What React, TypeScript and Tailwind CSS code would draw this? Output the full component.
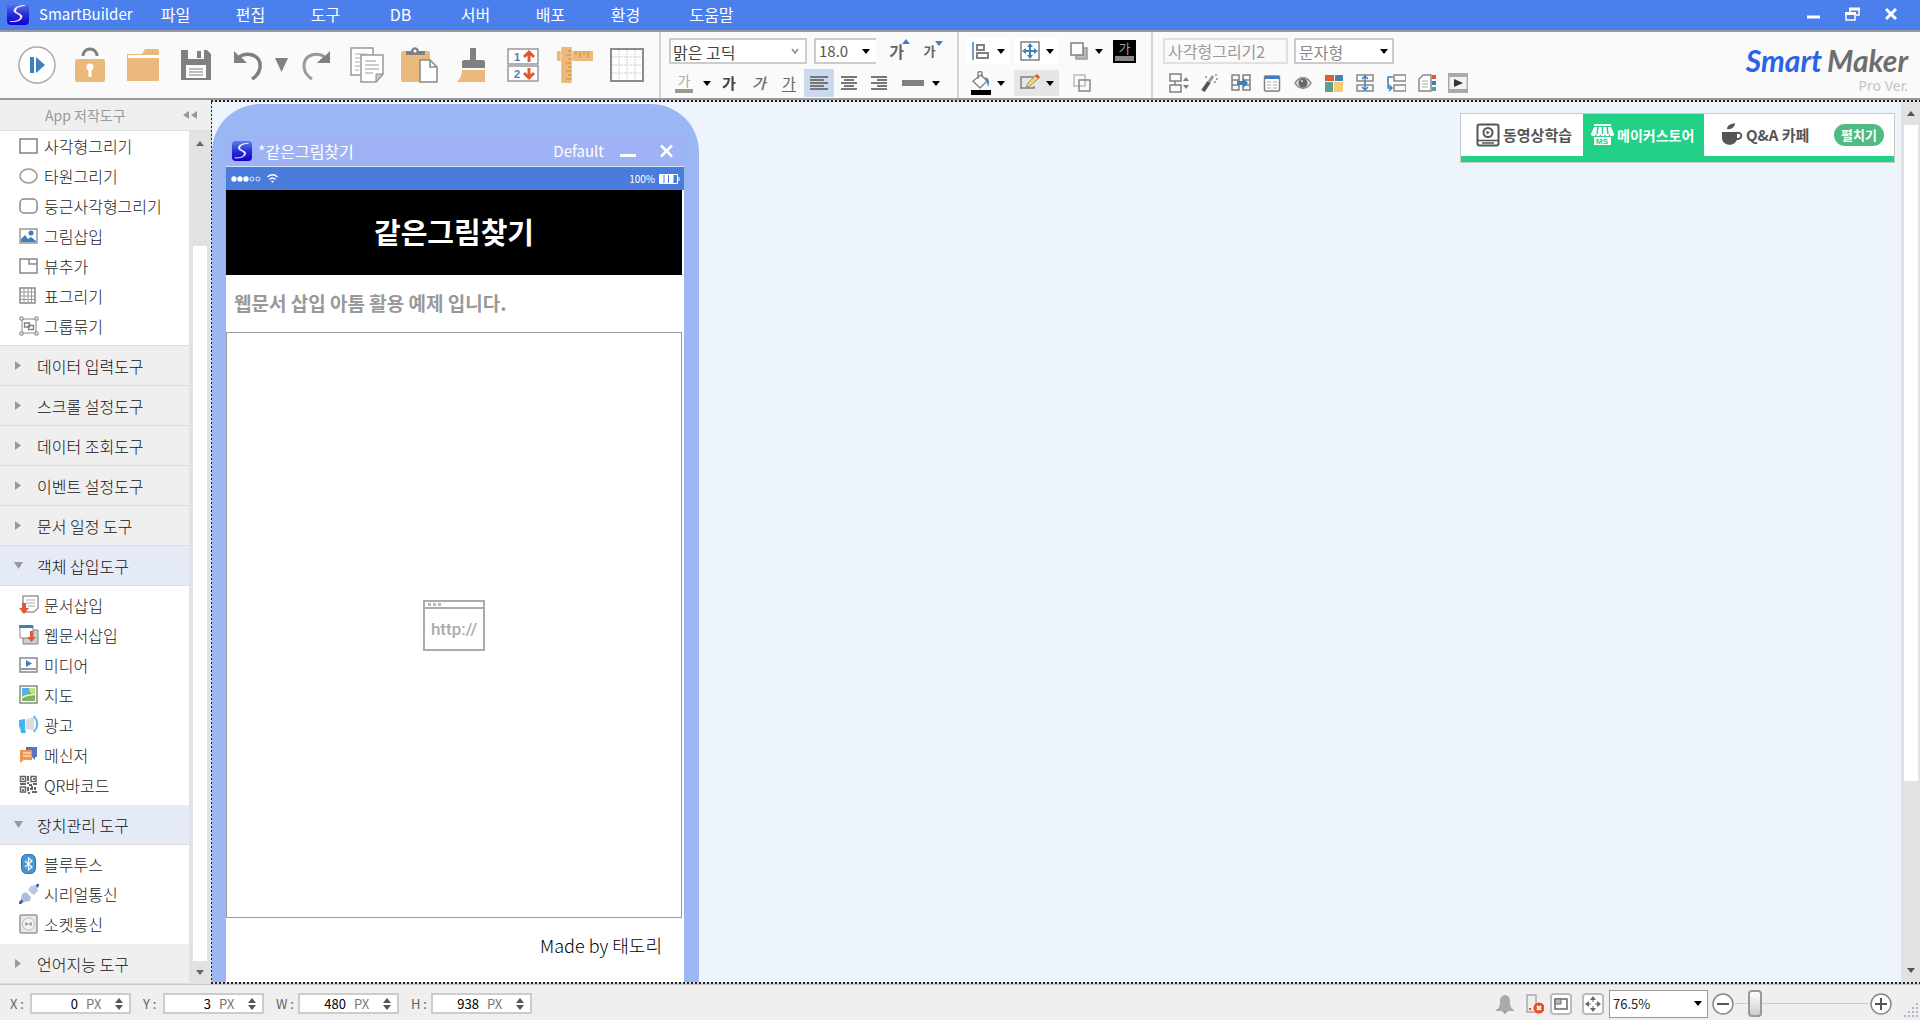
import React from 'react';

type Item = { label: string; icon: React.ReactNode };

const G = '#808080';
const ORANGE = '#ecb97c';
const BLUE = '#3f7fbf';
const RED = '#dc5a35';

function Svg({ w, h, children }: { w: number; h: number; children: React.ReactNode }) {
  return (
    <svg width={w} height={h} viewBox={`0 0 ${w} ${h}`} fill="none" className="shrink-0" aria-hidden="true">
      {children}
    </svg>
  );
}

function Down({ color = '#000' }: { color?: string }) {
  return <Svg w={8} h={5}><path d="M0 0h8L4 5z" fill={color} /></Svg>;
}

function Up({ color = '#000' }: { color?: string }) {
  return <Svg w={8} h={5}><path d="M0 5h8L4 0z" fill={color} /></Svg>;
}

function AppLogo({ size }: { size: number }) {
  return (
    <svg width={size} height={size} viewBox="0 0 22 22" fill="none" className="shrink-0" aria-hidden="true">
      <defs>
        <linearGradient id="logo" x1="0" y1="0" x2="0" y2="1">
          <stop offset="0" stopColor="#5a80f0" />
          <stop offset="0.5" stopColor="#2a2fd8" />
          <stop offset="1" stopColor="#1200d0" />
        </linearGradient>
      </defs>
      <rect width="22" height="22" rx="4" fill="url(#logo)" />
      <path d="M18 2.500C12 2.500 6.500 4.500 7 8c.4 2.800 7 3 6.500 6.200-.4 3-5.500 4.800-10.500 4.300 6 .6 12-1 12-5 0-3-6.500-3-6.300-6C9 4.800 12.500 3 18 2.500z" fill="#fff" stroke="#fff" strokeWidth=".6" />
    </svg>
  );
}

const tools = [
  {
    name: '실행', icon: (
      <Svg w={38} h={38}>
        <circle cx="19" cy="19" r="18" fill="#fff" stroke="#aaa" strokeWidth="1.500" />
        <path d="M12 11h4v16h-4z" fill={BLUE} /><path d="M18 11l9 8-9 8z" fill={BLUE} />
      </Svg>),
  },
  {
    name: '잠금', icon: (
      <Svg w={32} h={36}>
        <path d="M9 9c0-4 3-7 7-7s7 3 7 7" stroke={G} strokeWidth="3" />
        <rect x="1" y="12" width="30" height="23" rx="2" fill={ORANGE} />
        <circle cx="16" cy="20" r="3.500" fill="#fff" /><path d="M14.500 22h3v8h-3z" fill="#fff" />
      </Svg>),
  },
  {
    name: '열기', icon: (
      <Svg w={34} h={34}>
        <path d="M1 6h15l3-5h13l1 2v30H1z" fill={ORANGE} /><path d="M2 7h31v3H2z" fill="#fff" />
      </Svg>),
  },
  {
    name: '저장', icon: (
      <Svg w={32} h={32}>
        <path d="M1 1h26l4 4v26H1z" fill={G} /><path d="M8 1h16v9H8z" fill="#fafafa" /><path d="M17 2h4v7h-4z" fill={G} />
        <path d="M6 16h20v13H6z" fill="#fafafa" /><path d="M9 20h14M9 23h14M9 26h14" stroke={G} />
      </Svg>),
  },
  {
    name: '실행 취소', icon: (
      <Svg w={32} h={32}>
        <path d="M5 9c8-7 23-4 22 9-.4 5-3 9-8 12" stroke={G} strokeWidth="3.500" /><path d="M1 2v12h13l-4-4-5-4z" fill={G} />
      </Svg>),
  },
];

const tools2 = [
  {
    name: '복사', icon: (
      <Svg w={34} h={36}>
        <path d="M1 1h22v27H1z" fill="#fff" stroke="#999" strokeWidth="1.500" /><path d="M5 7h12M5 11h8M5 15h5M5 19h5M5 23h4" stroke="#aaa" />
        <path d="M11 8h22v19l-7 8H11z" fill="#fff" stroke="#999" strokeWidth="1.500" />
        <path d="M26 35v-8h7z" fill="#ccc" stroke="#888" /><path d="M15 14h11M15 18h14M15 22h14M15 26h8" stroke="#999" />
      </Svg>),
  },
  {
    name: '붙여넣기', icon: (
      <Svg w={38} h={36}>
        <rect x="1" y="4" width="29" height="31" rx="2" fill={ORANGE} />
        <path d="M6 8V4h5c1-5 7-5 8 0h6v4z" fill={G} /><circle cx="15" cy="4" r="1.500" fill="#fff" />
        <path d="M20 13h10l7 7v15H20z" fill="#fff" stroke="#888" strokeWidth="1.500" /><path d="M30 13v7h7" stroke="#888" strokeWidth="1.500" />
      </Svg>),
  },
  {
    name: '서식 복사', icon: (
      <Svg w={30} h={36}>
        <path d="M14 1h6v12h-6z" fill={G} /><path d="M8 13h19a2 2 0 012 2v6H6v-6a2 2 0 012-2z" fill={G} />
        <path d="M6 23h23v12H1c3-3 5-7 5-12z" fill={ORANGE} />
      </Svg>),
  },
  {
    name: '순서', icon: (
      <Svg w={32} h={34}>
        <path d="M1 1h30v15H1zM1 18h30v15H1z" fill="#fff" stroke="#999" strokeWidth="1.500" />
        <text x="7" y="13" fontSize="11" fontWeight="bold" fill={BLUE} fontFamily="Liberation Sans">1</text>
        <text x="7" y="30" fontSize="11" fontWeight="bold" fill={BLUE} fontFamily="Liberation Sans">2</text>
        <path d="M22 14V5M17 9l5-5 5 5M22 20v9M17 25l5 5 5-5" stroke={RED} strokeWidth="3" />
      </Svg>),
  },
  {
    name: '눈금자', icon: (
      <Svg w={38} h={38}>
        <path d="M1 5h36v10H1z" fill={ORANGE} /><path d="M20 5v4M24 5v6M28 5v4M32 5v6" stroke="#c98d3f" />
        <path d="M5 1h11v36H5z" fill={ORANGE} /><path d="M12 5h4M10 9h6M12 13h4M10 17h6M12 21h4M10 25h6M12 29h4M10 33h6" stroke="#c98d3f" />
        <path d="M5 1v36M16 1v36" stroke="#fff" strokeOpacity=".5" />
      </Svg>),
  },
  {
    name: '격자', icon: (
      <Svg w={34} h={34}>
        <path d="M1 1h32v32H1z" fill="#fff" stroke="#8c8c8c" strokeWidth="2" />
        <path d="M9 2v30M17 2v30M25 2v30M2 9h30M2 17h30M2 25h30" stroke="#ccc" strokeDasharray="2 1" />
      </Svg>),
  },
];

const propTools = [
  {
    name: '간격', icon: (
      <Svg w={20} h={20}>
        <path d="M1 1h11v7H1zM1 12h11v7H1zM6 8v4" stroke={G} strokeWidth="1.500" /><path d="M14 8h6l-3-4zM14 12h6l-3 4z" fill={G} />
      </Svg>),
  },
  {
    name: '마법봉', icon: (
      <Svg w={18} h={20}>
        <path d="M2 18L8 9" stroke="#555" strokeWidth="4" /><path d="M8 9l4-6" stroke="#999" strokeWidth="3" />
        <path d="M4 3h2v2H4zM14 1h2v2h-2zM13 8h2v2h-2zM15 5h2v2h-2z" fill="#aaa" />
      </Svg>),
  },
  {
    name: '이동', icon: (
      <Svg w={20} h={20}>
        <path d="M1 2h7v15H1zM12 2h7v15h-7zM1 7h7M1 12h7M12 7h7M12 12h7" stroke={G} strokeWidth="1.500" />
        <path d="M6 8h6V5l5 5-5 5v-3H6z" fill={BLUE} />
      </Svg>),
  },
  {
    name: '표 보기', icon: (
      <Svg w={18} h={20}>
        <rect x="1.500" y="3" width="15" height="15" rx="1" fill="#fff" stroke={G} strokeWidth="1.500" /><path d="M2 3h14v3H2z" fill={BLUE} />
        <path d="M4 9h4M4 12h4M4 15h4M10 9h4M10 12h4M10 15h4" stroke="#aaa" />
      </Svg>),
  },
  {
    name: '미리보기', icon: (
      <Svg w={18} h={20}>
        <path d="M1 10c4-7 12-7 16 0-4 7-12 7-16 0z" fill="#ddd" stroke="#888" strokeWidth="1.500" /><circle cx="9" cy="10" r="4.500" fill="#666" />
        <circle cx="8" cy="8" r="1" fill="#ddd" />
      </Svg>),
  },
  {
    name: '색상', icon: (
      <Svg w={18} h={20}>
        <path d="M0 2h9v6H0z" fill={RED} /><path d="M10 2h8v6h-8z" fill="#4a80b8" /><path d="M0 9h8v10H0z" fill="#5f9f8c" /><path d="M9 9h9v10H9z" fill="#f8ca74" />
      </Svg>),
  },
  {
    name: '높이', icon: (
      <Svg w={18} h={20}>
        <path d="M1 2h16v6H1zM1 12h16v6H1z" stroke="#888" strokeWidth="1.500" /><path d="M9 3v14M6 6l3-3 3 3M6 14l3 3 3-3" stroke={BLUE} strokeWidth="1.500" />
      </Svg>),
  },
  {
    name: '연결', icon: (
      <Svg w={20} h={20}>
        <path d="M8 2h12v6H8zM8 12h12v6H8z" stroke="#888" strokeWidth="1.500" /><path d="M7 4H2v11h3M3 12l3 3-3 3" stroke={BLUE} strokeWidth="1.500" />
      </Svg>),
  },
  {
    name: '문서 색인', icon: (
      <Svg w={18} h={20}>
        <path d="M5 2h8v16H1V6z" fill="#fff" stroke="#888" strokeWidth="1.500" /><path d="M4 8h6M4 11h6M4 14h6" stroke="#aaa" />
        <path d="M14 2h4v4h-4z" fill={RED} /><path d="M14 8h4v4h-4z" fill={BLUE} /><path d="M14 14h4v4h-4z" fill="#5f9f8c" />
      </Svg>),
  },
  {
    name: '재생', icon: (
      <Svg w={20} h={20}>
        <path d="M0 0h20v20H0z" fill="#aaa" /><path d="M1.500 4h17v12h-17z" fill="#f2f2f2" /><path d="M6 6l9 4-9 4z" fill="#333" />
      </Svg>),
  },
];

const drawItems: Item[] = [
  { label: '사각형그리기', icon: <Svg w={20} h={20}><path d="M1 3h17v14H1z" stroke={G} strokeWidth="1.500" /></Svg> },
  { label: '타원그리기', icon: <Svg w={20} h={20}><ellipse cx="9.500" cy="10" rx="8.500" ry="7" stroke="#999" strokeWidth="1.500" /></Svg> },
  { label: '둥근사각형그리기', icon: <Svg w={20} h={20}><rect x="1" y="3" width="17" height="14" rx="4" stroke="#888" strokeWidth="1.500" /></Svg> },
  {
    label: '그림삽입', icon: (
      <Svg w={20} h={20}><path d="M1 3h17v14H1z" fill="#fff" stroke="#999" strokeWidth="1.500" /><path d="M2 16v-3l4-4 3 4 3-2 5 4v1z" fill={BLUE} /><circle cx="12" cy="7" r="2.500" fill={BLUE} /></Svg>),
  },
  { label: '뷰추가', icon: <Svg w={20} h={20}><path d="M1 3h17v14H1zM10 3v5h8" stroke="#888" strokeWidth="1.500" /></Svg> },
  { label: '표그리기', icon: <Svg w={20} h={20}><path d="M1 2h15v15H1z" stroke="#888" strokeWidth="1.500" /><path d="M5 2v15M9 2v15M12.500 2v15M1 6h15M1 10h15M1 13.500h15" stroke="#999" /></Svg> },
  {
    label: '그룹묶기', icon: (
      <Svg w={20} h={20}>
        <path d="M3 3h14v14H3z" stroke="#888" /><path d="M1 1h3v3H1zM16 1h3v3h-3zM1 16h3v3H1zM16 16h3v3h-3z" fill="#fff" stroke={G} />
        <path d="M5.500 7h5v4h-5zM9.500 9.500h5v4h-5z" fill="#fff" stroke={G} strokeWidth="1.300" />
      </Svg>),
  },
];

const objectItems: Item[] = [
  {
    label: '문서삽입', icon: (
      <Svg w={20} h={20}><path d="M4 1h15v12l-4 4H4z" fill="#fff" stroke="#999" strokeWidth="1.500" /><path d="M7 5h9M7 8h9M9 11h7" stroke="#aaa" /><path d="M3 8h4v5h3l-5 6-5-6h3z" fill={RED} /></Svg>),
  },
  {
    label: '웹문서삽입', icon: (
      <Svg w={20} h={20}><path d="M4 5h15v14H4z" fill="#ccc" stroke={G} /><path d="M1 1h13v12H1z" fill="#fff" stroke="#888" /><path d="M0 0h14v3H0z" fill={BLUE} /><path d="M11 6h3v6h3l-4.500 5L8 12h3z" fill={RED} /></Svg>),
  },
  { label: '미디어', icon: <Svg w={20} h={20}><path d="M1 3h17v14H1z" fill="#fff" stroke="#888" strokeWidth="1.500" /><path d="M2 14h15" stroke="#999" strokeWidth="2" /><path d="M7 5l6 3.500L7 12z" fill={BLUE} /></Svg> },
  {
    label: '지도', icon: (
      <Svg w={20} h={20}><path d="M1 1h17v17H1z" fill="#fff" stroke="#888" strokeWidth="1.500" /><path d="M3 3h13v13H3z" fill="#7bb661" /><path d="M3 3h8l-2 5-6 3z" fill="#58aef0" /><path d="M10 3h6v5c-3 2-6 0-6-5z" fill="#c4e07a" /><path d="M3 13c4-4 8-2 13-4" stroke="#e8f3cf" strokeWidth="1.500" /></Svg>),
  },
  { label: '광고', icon: <Svg w={20} h={20}><path d="M0 5l6-1v10l1 4H2l-1-5-1-2z" fill="#45b4ea" /><path d="M7 4c3 0 6-1 8-3v16c-2-2-5-3-8-3z" fill="#dcdcdc" /><path d="M15 1c4 5 4 11 0 16" stroke="#5bb8ea" strokeWidth="2" /></Svg> },
  {
    label: '메신저', icon: (
      <Svg w={20} h={20}><path d="M7 2h11v10h-2v3l-3-3H7z" fill="#5b72bf" /><path d="M1 5h12v10H5l-4 3z" fill="#f0964a" /><path d="M4 8h8M4 11h8" stroke="#fff" /></Svg>),
  },
  {
    label: 'QR바코드', icon: (
      <Svg w={20} h={20}>
        <path d="M1.500 1.500h5v5h-5zM12 1.500h5v5h-5zM1.500 12h5v5h-5z" stroke="#666" strokeWidth="1.500" /><path d="M3 3h2v2H3zM14 3h2v2h-2zM3 14h2v2H3z" fill="#777" />
        <path d="M9 1v5M8 8h2M1 9h4M10 10h3M14 9h4M9 12v4M12 12h2M16 12v3M11 14h3M13 17h5M9 18h2M6 8v2" stroke="#666" strokeWidth="2" />
      </Svg>),
  },
];

const deviceItems: Item[] = [
  { label: '블루투스', icon: <Svg w={20} h={20}><rect x="2.500" y=".5" width="14" height="19" rx="5" fill="#4a96d2" stroke="#2f6ea3" /><path d="M6 7l7 6-3.500 3V4L13 7l-7 6" stroke="#fff" strokeWidth="1.200" /></Svg> },
  { label: '시리얼통신', icon: <Svg w={20} h={20}><path d="M0 20l4-4M16 4l4-4" stroke="#3d5fa8" strokeWidth="3" /><path d="M2 15l1-5 4-2 5 5-1 4-6 1z" fill="#a9bfd8" /><path d="M9 6l3-4 5-1 2 6-4 4-2-1z" fill="#b8cadf" /></Svg> },
  { label: '소켓통신', icon: <Svg w={20} h={20}><rect x="1" y="1" width="17" height="18" rx="1" fill="#e8e8e8" stroke="#999" strokeWidth="1.500" /><circle cx="9.500" cy="10" r="6" fill="#f4f4f4" stroke="#bbb" /><path d="M6 10h7M7 8v4M12 8v4" stroke="#888" /></Svg> },
];

function ToolList({ items, className }: { items: Item[]; className: string }) {
  return (
    <ul className={`bg-white ${className}`}>
      {items.map((item) => (
        <li key={item.label}>
          <button className="flex h-[30px] w-full items-center gap-[5px] pl-[19px] text-[16px] font-light text-[#222]">
            {item.icon}
            {item.label}
          </button>
        </li>
      ))}
    </ul>
  );
}

function Section({ title, open = false }: { title: string; open?: boolean }) {
  return (
    <button className={`flex h-10 w-full shrink-0 items-center border-b border-[#dcdcdc] pl-[14px] text-[16px] font-light text-[#111] ${open ? 'bg-[#e4eaf6]' : 'bg-[#efefef]'}`}>
      <span className="w-[23px]">
        {open ? <Svg w={9} h={7}><path d="M0 0h9L4.500 7z" fill="#999" /></Svg> : <Svg w={9} h={9}><path d="M1 0v9l6-4.500z" fill="#999" /></Svg>}
      </span>
      {title}
    </button>
  );
}

function Split({ icon, className = '', name }: { icon: React.ReactNode; className?: string; name: string }) {
  return (
    <button aria-label={name} className={`flex h-[26px] w-[45px] items-center ${className}`}>
      <span className="flex w-[32px] justify-center">{icon}</span>
      <Down />
    </button>
  );
}

function Field({ label, value }: { label: string; value: string }) {
  return (
    <div className="flex items-center gap-1">
      <label htmlFor={`pos-${label}`} className="min-w-4 text-[13px] whitespace-nowrap text-[#666]">{label} :</label>
      <div className="flex h-[21px] w-[101px] items-center border-2 border-[#ccc] bg-white pr-[6px] text-[13px]">
        <input id={`pos-${label}`} defaultValue={value} className="w-[46px] text-right text-black outline-none" />
        <span className="ml-2 text-[#777]">PX</span>
        <button aria-label={`${label} 값 조절`} className="ml-auto flex flex-col gap-[2px]">
          <Up color="#555" />
          <Down color="#555" />
        </button>
      </div>
    </div>
  );
}

function Bars({ d }: { d: string }) {
  return <Svg w={18} h={16}><path d={d} stroke="#777" strokeWidth="2" /></Svg>;
}

function Header() {
  return (
    <header className="flex h-[30px] shrink-0 items-center bg-[#4b7fec] pb-[2px] pl-[7px] text-[15px] text-white">
      <AppLogo size={22} />
      <h1 className="ml-[10px] w-[99px]">SmartBuilder</h1>
      <nav className="flex flex-1">
        {['파일', '편집', '도구', 'DB', '서버', '배포', '환경'].map((m) => (
          <button key={m} className="w-[75px] text-center text-[16px]">{m}</button>
        ))}
        <button className="ml-[11px] w-[75px] text-center text-[16px]">도움말</button>
      </nav>
      <div className="flex items-center gap-[25px] pr-[23px]">
        <button aria-label="최소화"><Svg w={13} h={14}><path d="M0 10h13" stroke="#fff" strokeWidth="3" /></Svg></button>
        <button aria-label="이전 크기로"><Svg w={15} h={14}><path d="M5 5V2h9v6h-3M1 6h9v7H1z" stroke="#fff" strokeWidth="1.500" /><path d="M4 2h11M0 6.500h11" stroke="#fff" strokeWidth="3" /></Svg></button>
        <button aria-label="닫기"><Svg w={12} h={14}><path d="M1 2l10 10M11 2L1 12" stroke="#fff" strokeWidth="3" /></Svg></button>
      </div>
    </header>
  );
}

function Toolbar() {
  return (
    <div className="flex h-[70px] shrink-0 border-t-2 border-b-2 border-t-[#999] border-b-[#999] bg-[#fafafa]">
      <div className="flex items-center border-r-2 border-[#d4d4d4] pr-[6px] pl-[10px]">
        {tools.map((t) => <button key={t.name} aria-label={t.name} className="flex w-[53px] justify-center">{t.icon}</button>)}
        <button aria-label="취소 목록"><Svg w={13} h={14}><path d="M0 0h13L6.500 14z" fill={G} /></Svg></button>
        <button aria-label="다시 실행" className="flex w-[53px] justify-center">
          <Svg w={32} h={32}><path d="M27 9C19 2 4 5 5 18c.4 5 3 9 8 12" stroke="#999" strokeWidth="3" /><path d="M31 2v12H18l4-4 5-4z" fill={G} /></Svg>
        </button>
        {tools2.map((t) => <button key={t.name} aria-label={t.name} className="flex w-[52px] justify-center">{t.icon}</button>)}
      </div>

      <div className="flex w-[298px] flex-col gap-[5px] border-r-2 border-[#d4d4d4] pt-[6px] pl-2">
        <div className="flex h-[26px] items-center">
          <div className="relative flex items-center">
            <select aria-label="글꼴" className="h-[26px] w-[138px] appearance-none border-2 border-[#ccc] bg-white pl-[2px] text-[16px] text-[#444]"><option>맑은 고딕</option></select>
            <span className="pointer-events-none absolute right-2"><Svg w={8} h={6}><path d="M1 1l3 4 3-4" stroke="#888" strokeWidth="1.500" /></Svg></span>
          </div>
          <div className="relative ml-[7px] flex items-center">
            <select aria-label="글꼴 크기" className="h-[26px] w-[62px] appearance-none border-2 border-r-0 border-[#ccc] bg-white pl-[3px] text-[15px] text-[#555]"><option>18.0</option></select>
            <span className="pointer-events-none absolute right-[6px]"><Down /></span>
          </div>
          <button aria-label="글자 크게" className="relative ml-[5px] w-[31px] text-[16px] font-bold text-[#666]">가<span className="absolute top-0 right-[2px]"><Up color={BLUE} /></span></button>
          <button aria-label="글자 작게" className="relative ml-[2px] w-[31px] text-[13px] font-bold text-[#666]">가<span className="absolute top-0 right-[2px]"><Down color={BLUE} /></span></button>
        </div>
        <div className="flex h-7 items-center">
          <button aria-label="글자색" className="flex w-[30px] flex-col items-center text-[14px] leading-[14px] text-[#aaa]">가<span className="mt-[2px] h-1 w-[18px] bg-[#999]" /></button>
          <button aria-label="글자색 목록" className="flex w-[15px] justify-center"><Down /></button>
          <button aria-label="굵게" className="w-[30px] text-[15px] font-bold text-[#444]">가</button>
          <button aria-label="기울임" className="w-[30px] text-[15px] font-medium text-[#666] italic">가</button>
          <button aria-label="밑줄" className="w-[30px] text-[15px] text-[#666] underline underline-offset-2">가</button>
          <button aria-label="왼쪽 정렬" className="flex h-7 w-[30px] items-center justify-center bg-[#c9daee]"><Bars d="M0 2h18M0 5h14M0 8h18M0 11h14M0 14h18" /></button>
          <button aria-label="가운데 정렬" className="flex w-[30px] justify-center"><Bars d="M1 2h16M4 5h10M1 8h16M4 11h10M1 14h16" /></button>
          <button aria-label="오른쪽 정렬" className="flex w-[30px] justify-center"><Bars d="M1 2h16M7 5h10M1 8h16M7 11h10M1 14h16" /></button>
          <button aria-label="선 굵기" className="flex w-[38px] justify-center"><span className="h-[6px] w-[22px] bg-[#808080]" /></button>
          <button aria-label="선 굵기 목록"><Down /></button>
        </div>
      </div>

      <div className="flex w-[194px] flex-col gap-[5px] border-r-2 border-[#d4d4d4] pt-[6px] pl-[6px]">
        <div className="flex h-[26px] items-center gap-1">
          <Split name="맞춤" className="bg-white" icon={<Svg w={18} h={18}><path d="M1 0v18" stroke={BLUE} strokeWidth="1.500" /><path d="M5 3h7v5H5zM5 11h11v5H5z" stroke={G} strokeWidth="2" /></Svg>} />
          <Split name="크기 맞춤" className="bg-white" icon={<Svg w={20} h={20}><path d="M1 1h18v18H1z" stroke={G} strokeWidth="1.500" /><path d="M10 4v12M4 10h12" stroke={BLUE} strokeWidth="2" /><path d="M7 6l3-4 3 4zM7 14l3 4 3-4zM6 7l-4 3 4 3zM14 7l4 3-4 3z" fill={BLUE} /></Svg>} />
          <Split name="겹치는 순서" icon={<Svg w={18} h={18}><path d="M13 6h4v11H6v-4" fill="#bbb" stroke="#999" strokeWidth="1.500" /><path d="M1 1h12v12H1z" fill="#fff" stroke={G} strokeWidth="1.500" /></Svg>} />
          <button aria-label="글자 배경" className="ml-[1px] flex h-[23px] w-[23px] flex-col items-center bg-black text-[13px] leading-[16px] text-[#999]">가<span className="h-[5px] w-[19px] bg-[#888]" /></button>
        </div>
        <div className="flex h-7 items-center gap-1">
          <Split name="채우기" icon={<Svg w={20} h={24}><path d="M2 10l8-6 6 6-7 7z" fill="#fff" stroke="#888" strokeWidth="1.500" /><path d="M7 8V2c0-2 4-2 4 0v4" stroke="#888" strokeWidth="1.500" /><path d="M14 6c4 1 5 5 3 10-1-4-1-7-3-10z" fill={BLUE} /><path d="M0 19h20v5H0z" fill="#000" /></Svg>} />
          <Split name="테두리" className="bg-[#e6e6e6]" icon={<Svg w={20} h={18}><path d="M14 3H1v11h13v-2" stroke={G} strokeWidth="1.500" /><path d="M6 13l2-4 8-8 3 3-9 8z" fill="#f0d878" stroke="#aa9060" /><path d="M15 2l2-2 3 3-2 2z" fill={RED} /></Svg>} />
          <button aria-label="겹치기" className="flex w-[38px] justify-center"><Svg w={18} h={18}><path d="M1 1h11v11H1z" stroke="#bbb" strokeWidth="1.500" /><path d="M6 6h11v11H6z" stroke="#888" strokeWidth="1.500" /></Svg></button>
        </div>
      </div>

      <div className="flex flex-col gap-[5px] pt-[6px] pl-[10px]">
        <div className="flex h-[26px] items-center gap-[6px]">
          <input aria-label="개체 이름" defaultValue="사각형그리기2" className="h-[26px] w-[125px] border-2 border-[#e0e0e0] pl-[3px] text-[16px] text-[#999]" />
          <div className="relative flex items-center">
            <select aria-label="자료형" className="h-[26px] w-[100px] appearance-none border-2 border-[#ccc] bg-white pl-[3px] text-[16px] text-[#888]"><option>문자형</option></select>
            <span className="pointer-events-none absolute right-[6px]"><Down /></span>
          </div>
        </div>
        <div className="flex h-7 items-center">
          {propTools.map((t) => <button key={t.name} aria-label={t.name} className="flex w-[31px] justify-center">{t.icon}</button>)}
        </div>
      </div>

      <div className="ml-auto flex flex-col items-end pt-[10px] pr-3">
        <p className="flex gap-[5px] font-['Lato'] text-[30px] leading-9 font-bold text-[#6e6e6e] italic"><span className="text-[#2c62e8]">Smart</span><span>Maker</span></p>
        <p className="font-['Noto_Sans'] text-[14px] leading-4 text-[#c4c4c4]">Pro Ver.</p>
      </div>
    </div>
  );
}

function Sidebar() {
  return (
    <aside className="flex w-[211px] shrink-0 flex-col bg-[#efefef]">
      <div className="flex h-[31px] shrink-0 items-center justify-between border-b border-[#ddd] pr-[14px] pl-[45px] text-[14px] text-[#999]">
        App 저작도구
        <button aria-label="도구 접기"><Svg w={14} h={8}><path d="M6 0v8L0 4zM14 0v8L8 4z" fill="#999" /></Svg></button>
      </div>
      <div className="flex min-h-0 flex-1">
        <div className="flex flex-1 flex-col overflow-hidden">
          <ToolList items={drawItems} className="border-b border-[#ddd] pb-1" />
          <Section title="데이터 입력도구" />
          <Section title="스크롤 설정도구" />
          <Section title="데이터 조회도구" />
          <Section title="이벤트 설정도구" />
          <Section title="문서 일정 도구" />
          <Section title="객체 삽입도구" open />
          <ToolList items={objectItems} className="pt-1 pb-[5px]" />
          <Section title="장치관리 도구" open />
          <ToolList items={deviceItems} className="pt-1 pb-[5px]" />
          <Section title="언어지능 도구" />
        </div>
        <div className="flex w-[22px] flex-col bg-[#e2e2e2] pr-1 pl-1">
          <div className="flex h-[115px] justify-center pt-[10px]"><Up color="#666" /></div>
          <div className="flex-1 bg-white" />
          <div className="flex h-[23px] items-center justify-center"><Down color="#666" /></div>
        </div>
      </div>
    </aside>
  );
}

function Phone() {
  return (
    <section className="mt-[2px] flex w-[487px] flex-col rounded-t-[48px] bg-[#9bb7f3] pt-8 pr-[15px] pl-[14px]">
      <div className="flex h-[30px] shrink-0 items-center bg-[#a0b2f6] pr-[11px] pl-[6px] text-[16px] text-white">
        <AppLogo size={20} />
        <span className="ml-[6px] flex-1">*같은그림찾기</span>
        <span className="text-[15px]">Default</span>
        <button aria-label="창 최소화" className="ml-[16px]"><Svg w={16} h={14}><path d="M0 11.500h16" stroke="#fff" strokeWidth="3" /></Svg></button>
        <button aria-label="창 닫기" className="ml-[24px]"><Svg w={13} h={14}><path d="M1 1.500l11 11M12 1.500l-11 11" stroke="#fff" strokeWidth="2.500" /></Svg></button>
      </div>
      <div className="flex h-6 shrink-0 items-center border-t border-[#d5e2fb] bg-[#4a7cdc] px-1 text-[10px] text-white">
        <Svg w={32} h={6}>
          <circle cx="4" cy="3" r="2.700" fill="#fff" /><circle cx="10" cy="3" r="2.700" fill="#fff" /><circle cx="16" cy="3" r="2.700" fill="#fff" />
          <circle cx="22" cy="3" r="2" stroke="#fff" strokeWidth=".8" /><circle cx="28" cy="3" r="2" stroke="#fff" strokeWidth=".8" />
        </Svg>
        <span className="ml-[5px] flex-1"><Svg w={11} h={9}><path d="M.5 3c3-3 7-3 10 0M2.500 5.500c2-2 4-2 6 0" stroke="#fff" strokeWidth="1.300" /><path d="M3.800 6.800h3.400L5.500 9z" fill="#fff" /></Svg></span>
        100%
        <span className="ml-1"><Svg w={21} h={10}><path d="M.5.5h18v9H.5zM20 3v4" stroke="#fff" /><path d="M1 1h3.500v8H1zM5.500 1h3.500v8H5.500zM10 1h4.500v8H10z" fill="#fff" /></Svg></span>
      </div>
      <div className="flex min-h-0 flex-1 flex-col overflow-hidden bg-white pr-[2px]">
        <h2 className="flex h-[85px] shrink-0 items-center justify-center bg-black pb-[2px] text-[29px] font-bold text-white">같은그림찾기</h2>
        <p className="flex h-[57px] shrink-0 items-center pl-2 text-[19px] font-bold text-[#999]">웹문서 삽입 아톰 활용 예제 입니다.</p>
        <div className="flex h-[586px] shrink-0 items-center justify-center border border-[#999]">
          <div className="flex h-[51px] w-[62px] flex-col border-2 border-[#a9abae]">
            <div className="flex h-3 items-center gap-[2px] border-b-2 border-[#a9abae] pl-[3px]">
              <span className="size-[3px] bg-[#b8babd]" /><span className="size-[3px] bg-[#b8babd]" /><span className="size-[3px] bg-[#b8babd]" />
            </div>
            <span className="text-center font-['Roboto'] text-[17px] leading-[40px] font-medium text-[#a9abae]">http://</span>
          </div>
        </div>
        <p className="pt-[14px] pr-5 text-right text-[18px] font-light text-black">Made by 태도리</p>
      </div>
    </section>
  );
}

function Banner() {
  return (
    <div className="mt-[11px] mr-[6px] flex h-[50px] w-[435px] border border-[#c8c8c8] bg-white text-[15px] font-bold text-[#555]">
      <div className="flex flex-1 border-b-[6px] border-[#22d086]">
        <a href="#video" className="flex w-[122px] items-center gap-[3px] pl-[15px] whitespace-nowrap">
          <Svg w={24} h={24}><rect x="1.500" y="1.500" width="21" height="21" rx="2" stroke="#555" strokeWidth="2" /><circle cx="12" cy="9.500" r="4.500" stroke="#555" strokeWidth="2" /><path d="M10.500 7.500l3.500 2-3.500 2z" fill="#555" /><path d="M2 17.500h20M6 20h12" stroke="#555" strokeWidth="1.500" /></Svg>
          동영상학습
        </a>
        <a href="#store" className="flex w-[121px] items-center gap-[3px] bg-[#22d086] pl-2 text-[14px] whitespace-nowrap text-white">
          <Svg w={23} h={22}><path d="M3 1h17" stroke="#fff" strokeWidth="2" /><path d="M3 3h17l3 7c0 3-4 3-4.500 0-.5 3-4 3-4.500 0-.5 3-4 3-4.500 0-.5 3-4 3-4.500 0C4.500 13 0 13 0 10z" fill="#fff" /><path d="M7 3l-1 7M11.500 3v7M16 3l1 7" stroke="#22d086" strokeWidth="1.500" /><path d="M3 13h17v8H3z" fill="#fff" /><text x="5" y="20" fontSize="8" fontWeight="bold" fill="#22d086" fontFamily="Liberation Sans">MS</text></Svg>
          메이커스토어
        </a>
        <a href="#cafe" className="flex w-[128px] items-center gap-[3px] pl-[18px] whitespace-nowrap">
          <Svg w={21} h={24}><path d="M0 9h15v6c0 9-15 9-15 0z" fill="#555" /><path d="M14 10c7-2 7 7 0 6" stroke="#555" strokeWidth="2" /><path d="M5 6c0-4 4-5 8-6 0 4-4 7-8 6z" fill="#555" /></Svg>
          Q&amp;A 카페
        </a>
        <button className="my-auto ml-[2px] flex h-[22px] w-[50px] items-center justify-center rounded-full bg-[#4fba82] text-[13px] text-white">펼치기</button>
      </div>
    </div>
  );
}

function StatusBar() {
  return (
    <footer className="flex h-9 shrink-0 items-center border-t border-[#ccc] bg-[#efefef] pt-[2px] pl-[10px]">
      <div className="flex items-center gap-3">
        <Field label="X" value="0" />
        <Field label="Y" value="3" />
        <Field label="W" value="480" />
        <Field label="H" value="938" />
      </div>
      <div className="ml-auto flex items-center">
        <button aria-label="알림"><Svg w={18} h={20}><path d="M9 1c5 1 5 4 5 8 0 3 1 5 4 7v1H0v-1c3-2 4-4 4-7 0-4 0-7 5-8z" fill="#aaa" /><path d="M6 17h6l-3 3z" fill="#999" /></Svg></button>
        <button aria-label="기기 연결 끊김" className="ml-3"><Svg w={18} h={20}><path d="M1 1h9v17H1z" fill="#eee" stroke="#aaa" strokeWidth="1.500" /><circle cx="13" cy="14" r="5.500" fill="#f04a1c" /><path d="M11 12l4 4M15 12l-4 4" stroke="#fff" strokeWidth="1.800" /><path d="M3 14h2v2H3z" fill="#f04a1c" /></Svg></button>
        <button aria-label="미리보기 창" className="ml-[6px] flex size-[22px] items-center justify-center rounded-sm border-2 border-[#bbb] bg-white"><Svg w={14} h={12}><path d="M1 1h12v10H1z" stroke="#666" strokeWidth="1.500" /><path d="M1 1h6v5H1z" fill="#bbb" stroke="#666" /></Svg></button>
        <button aria-label="화면 맞춤" className="ml-[10px] flex size-[22px] items-center justify-center rounded-sm border-2 border-[#bbb] bg-white"><Svg w={16} h={16}><path d="M5 4l3-4 3 4zM5 12l3 4 3-4zM4 5L0 8l4 3zM12 5l4 3-4 3z" fill="#666" /><path d="M8 4v2M8 10v2M4 8h2M10 8h2" stroke="#666" /></Svg></button>
        <div className="relative ml-[5px] flex items-center">
          <select aria-label="배율" className="h-[28px] w-[99px] appearance-none border border-[#999] bg-white pl-[3px] text-[13px] text-[#222]"><option>76.5%</option></select>
          <span className="pointer-events-none absolute right-[6px]"><Down /></span>
        </div>
        <button aria-label="축소" className="ml-1"><Svg w={22} h={22}><circle cx="11" cy="11" r="10" fill="#fff" stroke="#888" strokeWidth="1.500" /><path d="M5 11h12" stroke="#555" strokeWidth="2" /></Svg></button>
        <input
          type="range" aria-label="확대 비율" min="0" max="100" defaultValue="11"
          className="mx-[1px] h-7 w-[134px] appearance-none bg-[linear-gradient(#ccc,#ccc)] bg-[length:100%_1px] bg-center bg-no-repeat [&::-webkit-slider-thumb]:h-[27px] [&::-webkit-slider-thumb]:w-[14px] [&::-webkit-slider-thumb]:appearance-none [&::-webkit-slider-thumb]:rounded-sm [&::-webkit-slider-thumb]:border-2 [&::-webkit-slider-thumb]:border-[#999] [&::-webkit-slider-thumb]:bg-linear-to-b [&::-webkit-slider-thumb]:from-white [&::-webkit-slider-thumb]:to-[#ccc]"
        />
        <button aria-label="확대"><Svg w={22} h={22}><circle cx="11" cy="11" r="10" fill="#fff" stroke="#888" strokeWidth="1.500" /><path d="M5 11h12M11 5v12" stroke="#555" strokeWidth="2" /></Svg></button>
        <span className="ml-3 self-end"><Svg w={16} h={16}><path d="M12 2h2M8 6h2M12 6h2M4 10h2M8 10h2M12 10h2M0 14h2M4 14h2M8 14h2M12 14h2" stroke="#a9b4d6" strokeWidth="2" /></Svg></span>
      </div>
    </footer>
  );
}

function App() {
  return (
    <div className="flex h-screen w-full flex-col overflow-hidden font-['Noto_Sans_CJK_KR',sans-serif]">
      <Header />
      <Toolbar />
      <div className="flex min-h-0 flex-1">
        <Sidebar />
        <main className="flex min-w-0 flex-1 flex-col bg-[#edf4fc]">
          <div className="h-[2px] shrink-0 bg-[repeating-linear-gradient(90deg,#222_0_2px,#ddd_2px_4px)]" />
          <div className="flex min-h-0 flex-1">
            <div className="w-px shrink-0 bg-[repeating-linear-gradient(#222_0_2px,#ccd_2px_4px)]" />
            <div className="flex min-w-0 flex-1 justify-between">
              <Phone />
              <Banner />
            </div>
            <div className="flex w-[19px] shrink-0 flex-col bg-[#e2e2e2] pr-[2px] pl-[3px]">
              <div className="flex h-[23px] items-center justify-center"><Up color="#555" /></div>
              <div className="h-[656px] bg-white" />
              <div className="mt-auto flex h-[23px] items-center justify-center"><Down color="#555" /></div>
            </div>
          </div>
          <div className="h-[2px] shrink-0 bg-[repeating-linear-gradient(90deg,#222_0_2px,#ddd_2px_4px)]" />
        </main>
      </div>
      <StatusBar />
    </div>
  );
}

export default App;
